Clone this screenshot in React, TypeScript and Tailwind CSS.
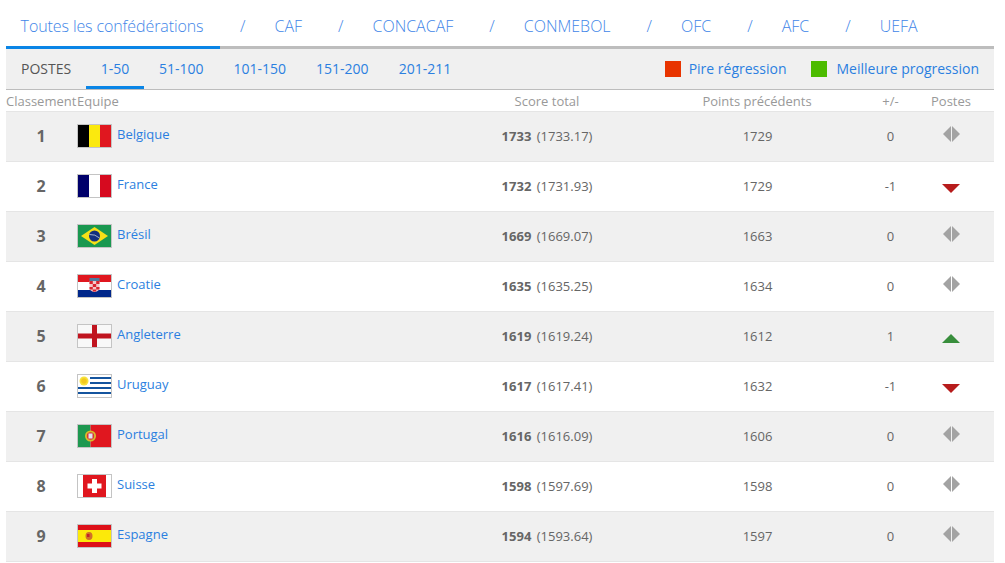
import type { ReactNode } from "react";

const TABS = ["CAF", "CONCACAF", "CONMEBOL", "OFC", "AFC", "UEFA"];
const RANGES = ["1-50", "51-100", "101-150", "151-200", "201-211"];

function Flag({ children }: { children: ReactNode }) {
  return (
    <svg width="35" height="24" viewBox="0 0 35 24" className="-mt-[2px] block shrink-0">
      {children}
      <rect x="0.5" y="0.5" width="34" height="23" fill="none" stroke="#c4c4c4" />
    </svg>
  );
}

const FLAGS: Record<string, ReactNode> = {
  be: (
    <>
      <rect width="12" height="24" fill="#000" />
      <rect x="12" width="11" height="24" fill="#fbe90e" />
      <rect x="23" width="12" height="24" fill="#e0171f" />
    </>
  ),
  fr: (
    <>
      <rect width="12" height="24" fill="#00006b" />
      <rect x="12" width="11" height="24" fill="#fff" />
      <rect x="23" width="12" height="24" fill="#d60a1f" />
    </>
  ),
  br: (
    <>
      <rect width="35" height="24" fill="#1a9850" />
      <polygon points="17.5,3 31,12 17.5,21 4,12" fill="#f7e017" />
      <circle cx="17.5" cy="12" r="5.5" fill="#14307f" />
      <path d="M12.5 10.5 Q18 10 22.5 14" stroke="#dfe8ef" strokeWidth="0.7" fill="none" />
    </>
  ),
  hr: (
    <>
      <rect width="35" height="8" fill="#e0171f" />
      <rect y="8" width="35" height="8" fill="#fff" />
      <rect y="16" width="35" height="8" fill="#00278a" />
      <rect x="12.500" y="4" width="10" height="3" fill="#4d7a9c" />
      <path d="M12.500 7h10v7q0 3-5 4q-5-1-5-4z" fill="#f3c6c8" />
      <path d="M12.500 7h3.300v3h-3.300zM19.200 7h3.300v3h-3.300zM15.800 10h3.400v3h-3.400zM12.500 13h3.300v2.500h-3.300zM19.200 13h3.300v2.500h-3.300zM15.800 15.500h3.400v2h-3.400z" fill="#d9222c" />
    </>
  ),
  en: (
    <>
      <rect width="35" height="24" fill="#f8f8f8" />
      <rect x="15" width="5" height="24" fill="#c0141f" />
      <rect y="9.500" width="35" height="5" fill="#c0141f" />
    </>
  ),
  uy: (
    <>
      <rect width="35" height="24" fill="#fff" />
      <rect x="13" y="3" width="22" height="2" fill="#14549e" />
      <rect x="13" y="8" width="22" height="2" fill="#14549e" />
      <rect y="13" width="35" height="2" fill="#14549e" />
      <rect y="18" width="35" height="2" fill="#14549e" />
      <circle cx="7" cy="7" r="4.500" fill="#f7e23a" />
      <circle cx="7" cy="7" r="2.800" fill="#f2c81e" />
    </>
  ),
  pt: (
    <>
      <rect width="13.500" height="24" fill="#1e9850" />
      <rect x="13.500" width="21.500" height="24" fill="#e0171f" />
      <circle cx="13.500" cy="12" r="5.500" fill="#d8bd2a" />
      <circle cx="13.500" cy="12" r="3.700" fill="#d8333a" />
      <rect x="11.500" y="9.500" width="4" height="5" fill="#dfe6f2" />
    </>
  ),
  ch: (
    <>
      <rect width="35" height="24" fill="#fff" />
      <rect x="6" width="23" height="24" fill="#e0171f" />
      <rect x="15" y="5" width="5" height="14" fill="#fff" />
      <rect x="10.500" y="9.500" width="14" height="5" fill="#fff" />
    </>
  ),
  es: (
    <>
      <rect width="35" height="24" fill="#dd1018" />
      <rect y="6" width="35" height="12" fill="#fce90a" />
      <ellipse cx="12" cy="12" rx="3.500" ry="4" fill="#d0702a" />
      <rect x="10" y="10" width="2.500" height="3" fill="#c2202a" />
    </>
  ),
};

const ROWS = [
  { rank: 1, flag: "be", name: "Belgique", total: "1733", exact: "1733.17", prev: "1729", diff: "0" },
  { rank: 2, flag: "fr", name: "France", total: "1732", exact: "1731.93", prev: "1729", diff: "-1" },
  { rank: 3, flag: "br", name: "Brésil", total: "1669", exact: "1669.07", prev: "1663", diff: "0" },
  { rank: 4, flag: "hr", name: "Croatie", total: "1635", exact: "1635.25", prev: "1634", diff: "0" },
  { rank: 5, flag: "en", name: "Angleterre", total: "1619", exact: "1619.24", prev: "1612", diff: "1" },
  { rank: 6, flag: "uy", name: "Uruguay", total: "1617", exact: "1617.41", prev: "1632", diff: "-1" },
  { rank: 7, flag: "pt", name: "Portugal", total: "1616", exact: "1616.09", prev: "1606", diff: "0" },
  { rank: 8, flag: "ch", name: "Suisse", total: "1598", exact: "1597.69", prev: "1598", diff: "0" },
  { rank: 9, flag: "es", name: "Espagne", total: "1594", exact: "1593.64", prev: "1597", diff: "0" },
];

function Trend({ diff }: { diff: string }) {
  if (diff === "-1") {
    return (
      <svg width="18" height="9" viewBox="0 0 18 9" className="mt-1">
        <polygon points="0,0 18,0 9,9" fill="#b71c1c" />
      </svg>
    );
  }
  if (diff === "1") {
    return (
      <svg width="18" height="9" viewBox="0 0 18 9" className="mt-1">
        <polygon points="9,0 18,9 0,9" fill="#388e3c" />
      </svg>
    );
  }
  return (
    <svg width="17" height="16" viewBox="0 0 17 16" className="-mt-[6px]">
      <polygon points="8,0 8,16 0,8" fill="#a3a3a3" />
      <polygon points="9,0 9,16 17,8" fill="#a3a3a3" />
    </svg>
  );
}

export default function App() {
  return (
    <div
      className="h-[563px] overflow-hidden bg-white px-[6px] pr-[11px] text-[#666]"
      style={{ fontFamily: '"Open Sans", sans-serif' }}
    >
      {/* Confédérations */}
      <div className="flex h-[49px] border-b-[3px] border-[#bdbdbd] font-light text-[16px] text-[#3f86e8]">
        <div className="-mb-[3px] flex h-[49px] w-[214px] items-center justify-center border-b-[3px] border-[#0a85e6] pr-[2px] pt-[6px]">
          <span className="tracking-[-0.1px]">Toutes les confédérations</span>
        </div>
        {TABS.map((tab) => (
          <div key={tab} className="flex items-center pt-[6px]">
            <span className="ml-[20px]">/</span>
            <span className="ml-[29px] mr-[16px]">{tab}</span>
          </div>
        ))}
      </div>

      {/* Postes + légende */}
      <div className="flex h-[41px] items-stretch border-b border-[#bdbdbd] bg-[#f0f0f0] text-[14px]">
        <div className="flex w-[80px] items-center pb-[2px] pl-[15px] text-[#555]">POSTES</div>
        {RANGES.map((range, i) => (
          <div
            key={range}
            className={
              i === 0
                ? "flex w-[58px] items-center justify-center border-b-[3px] border-[#0a85e6] pt-[1px] text-[#2b7fe0]"
                : "flex items-center px-[15px] pb-[2px] text-[#2b7fe0]"
            }
          >
            {range}
          </div>
        ))}
        <div className="ml-auto flex items-center pr-[15px] text-[#2b7fe0]">
          <span className="mr-[8px] h-4 w-4 bg-[#e83400]" />
          <span className="pb-[2px]">Pire régression</span>
          <span className="ml-[25px] mr-[9px] h-4 w-4 bg-[#4cbb00]" />
          <span className="pb-[2px]">Meilleure progression</span>
        </div>
      </div>

      {/* En-tête du tableau */}
      <div className="flex h-[22px] items-center border-b border-[#e5e5e5] pt-[3px] text-[13px] text-[#999]">
        <div className="w-[71px] whitespace-nowrap">Classement</div>
        <div className="w-[375px]">Equipe</div>
        <div className="w-[190px] text-center">Score total</div>
        <div className="w-[230px] text-center">Points précédents</div>
        <div className="w-[36px] pl-[1px] text-center">+/-</div>
        <div className="w-[86px] text-center">Postes</div>
      </div>

      {ROWS.map((row, i) => (
        <div
          key={row.rank}
          className={
            i % 2 === 0
              ? "flex h-[50px] items-center border-b border-[#e5e5e5] bg-[#f0f0f0] text-[13px]"
              : "flex h-[50px] items-center border-b border-[#e5e5e5] bg-white text-[13px]"
          }
        >
          <div className="-mt-[2px] w-[71px] pr-[1px] text-center text-[16px] font-bold text-[#666]">{row.rank}</div>
          <div className="flex w-[375px] items-center gap-[5px]">
            <Flag>{FLAGS[row.flag]}</Flag>
            <span className="-mt-[3px] text-[#2b7fe0]">{row.name}</span>
          </div>
          <div className="w-[190px] text-center">
            <span className="font-bold">{row.total}</span> <span className="ml-[2px]">({row.exact})</span>
          </div>
          <div className="w-[230px] pl-[1px] text-center">{row.prev}</div>
          <div className="w-[36px] pl-[1px] text-center">{row.diff}</div>
          <div className="flex w-[86px] justify-center">
            <Trend diff={row.diff} />
          </div>
        </div>
      ))}
    </div>
  );
}
